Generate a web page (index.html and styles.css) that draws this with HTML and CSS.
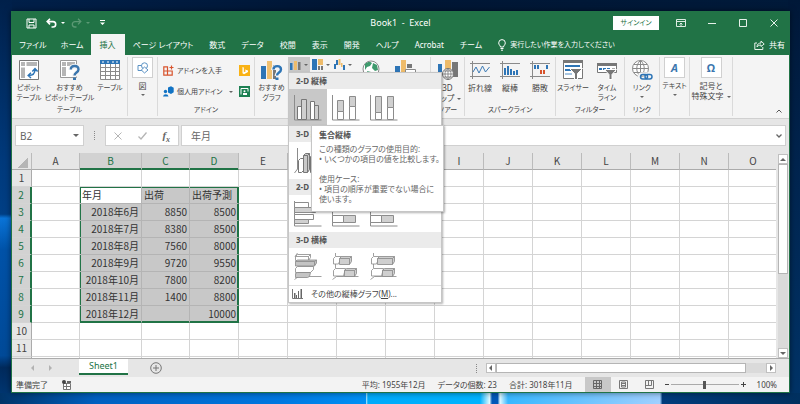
FILE: index.html
```html
<!DOCTYPE html>
<html lang="ja">
<head>
  <meta charset="UTF-8" />
  <meta name="viewport" content="width=device-width, initial-scale=1.0" />
  <title>Book1 - Excel</title>
  <link rel="stylesheet" href="styles.css">
</head>
<body>
  <div class="window">

    <!-- Title bar -->
    <header class="titlebar">
      <div class="quick">
        <button class="save" aria-label="上書き保存"><svg width="11" height="11" viewBox="0 0 11 11" fill="none" stroke="#fff"><path d="M1 1h9v9H1zM3 1v3.500h5V1M3 10V7h5v3"/></svg></button>
        <button aria-label="元に戻す"><svg width="11" height="10" viewBox="0 0 11 10" fill="none" stroke="#fff" stroke-width="1.600"><path d="M4 .8L1.200 3.600 4 6.400M1.500 3.600H7a2.700 2.700 0 0 1 0 5.400H5.500"/></svg></button>
        <i class="caret light"></i>
        <button class="off" aria-label="やり直し"><svg width="11" height="10" viewBox="0 0 11 10" fill="none" stroke="#5b9974" stroke-width="1.300"><path d="M7 .8l2.800 2.800L7 6.400M9.500 3.600H4a2.700 2.700 0 0 0 0 5.400h1.500"/></svg></button>
        <i class="caret dim"></i>
        <button class="custom" aria-label="クイック アクセス ツール バーのユーザー設定"><svg width="5" height="6" viewBox="0 0 5 6" fill="#fff"><path d="M0 0h5v1H0zM0 2.500h5L2.500 5z"/></svg></button>
      </div>
      <div class="title">Book1&nbsp; -&nbsp; Excel</div>
      <div class="winbtns">
        <button class="signin">サインイン</button>
        <button aria-label="リボンの表示オプション"><svg width="10" height="8" viewBox="0 0 10 8" fill="none" stroke="#dcebe2"><path d="M.5.5h9v7h-9zM.5 2.500h9M5 8V4M3.500 5.500L5 4l1.500 1.500"/></svg></button>
        <button aria-label="最小化"><svg width="8" height="8" viewBox="0 0 8 8" stroke="#e6f1ea"><path d="M0 4.500h8"/></svg></button>
        <button aria-label="最大化"><svg width="8" height="8" viewBox="0 0 8 8" fill="none" stroke="#e6f1ea"><path d="M.5.5h7v7h-7z"/></svg></button>
        <button aria-label="閉じる"><svg width="8" height="8" viewBox="0 0 8 8" stroke="#e6f1ea"><path d="M.5.5l7 7M7.500.5l-7 7"/></svg></button>
      </div>
    </header>

    <!-- Ribbon tabs -->
    <nav class="tabs">
      <button>ファイル</button>
      <button>ホーム</button>
      <button class="active">挿入</button>
      <button>ページ レイアウト</button>
      <button>数式</button>
      <button>データ</button>
      <button>校閲</button>
      <button>表示</button>
      <button>開発</button>
      <button>ヘルプ</button>
      <button>Acrobat</button>
      <button>チーム</button>
      <button class="tell"><svg width="8" height="12" viewBox="0 0 8 12" fill="none" stroke="#fff"><path d="M2.500 8C2.500 6.500.7 6 .7 3.900a3.300 3.300 0 0 1 6.600 0C7.300 6 5.500 6.500 5.500 8zM2.500 9.500h3M3 11.200h2"/></svg>実行したい作業を入力してください</button>
      <button class="share"><svg width="11" height="10" viewBox="0 0 11 10" fill="none" stroke="#e6f1ea"><path d="M3 3H.8v6.500h8V7M3 7c0-3 2-4 4-4V1l3.200 3L7 6.500V5C5.500 5 4 5.500 3 7z"/></svg>共有</button>
    </nav>

    <!-- Ribbon -->
    <section class="ribbon">
      <div class="group g-table small">
        <div class="tools">
          <button class="tool pivot"><svg width="20" height="20" viewBox="0 0 20 20"><path fill="#fff" stroke="#777" d="M.5.5h19v19H.5z"/><path fill="#b5b5b5" d="M2 2h4v4H2zM7.500 2H18v4H7.500zM2 7.500h4V18H2z"/><path fill="none" stroke="#2e75b6" stroke-width="1.500" d="M9.500 15.500c4.500 0 6.500-2 6.500-6M12 12.800l-2.800 2.700L12 18M13.300 11.500L16 8.700l2.600 2.800"/></svg><span>ピボット<br>テーブル</span></button>
          <button class="tool recpivot"><svg width="20" height="20" viewBox="0 0 20 20"><path fill="#fff" stroke="#999" d="M.5.5h16v17H.5z"/><path fill="#b5b5b5" d="M2 2h4v4H2zM7 2h8v4H7zM2 7h4v9H2z"/><path fill="none" stroke="#f4f4f4" stroke-width="5" d="M10.500 10c0-5 8-5 8 0 0 3-4 3-4 6.500"/><path fill="none" stroke="#3b76ae" stroke-width="2.400" d="M10.800 9.500c0-4.700 7.700-4.700 7.700 0 0 3-4 3-4 6"/><path fill="#3b76ae" d="M13 17.500h3V20h-3z"/></svg><span>おすすめ<br>ピボットテーブル</span></button>
          <button class="tool tbl"><svg width="20" height="20" viewBox="0 0 20 20"><path fill="#fff" d="M0 0h20v20H0z"/><path fill="#2e75b6" d="M0 0h20v4H0z"/><path fill="none" stroke="#8a8a8a" d="M.5 4v15.500h19V4M5.500 4v15M10.500 4v15M15.500 4v15M0 7.500h20M0 11.500h20M0 15.500h20"/><path fill="#fff" d="M2 1.500h2v1H2zM7 1.500h2v1H7zM12 1.500h2v1h-2zM16 1.500h2v1h-2z"/></svg><span>テーブル</span></button>
        </div>
        <div class="glabel">テーブル</div>
      </div>

      <div class="group g-shape">
        <button class="tool boxed"><b><svg width="12" height="12" viewBox="0 0 12 12" fill="#fff" stroke="#5b92c4"><path d="M1 3.500h6v5H1z"/><circle cx="7.500" cy="3.800" r="3"/><path d="M7.500 5L11 8 7.500 11 4.300 8z"/></svg></b><span>図</span><i class="caret"></i></button>
      </div>

      <div class="group g-addin small">
        <div class="addins">
          <div class="addcol">
            <button class="row"><svg width="11" height="11" viewBox="0 0 11 11" fill="none" stroke="#d8532c" stroke-width="1.200"><path d="M.8 1.800h3.700v8.400H.8zM.8 6h8.400v4.200H.8M6.500 2.500h4M8.500.5v4"/></svg>アドインを入手</button>
            <button class="row"><svg width="11" height="11" viewBox="0 0 11 11" fill="#1273c4"><path d="M5 1.500L8 .3l2.700 1.500v4.500L8 8 5 6.500z"/><circle cx="2.500" cy="5.500" r="1.700"/><path d="M0 10.500a2.800 2.800 0 0 1 5.500 0z"/></svg>個人用アドイン<i class="caret"></i></button>
          </div>
          <div class="addcol side">
            <button aria-label="Bing マップ"><svg width="11" height="11" viewBox="0 0 11 11"><path fill="#f9b215" d="M0 0h11v11H0z"/><path fill="#fff" d="M3.500 2l1.300.6v4.600l2-1-1-1.700L9 5.500v1.400L5 9.300l-1.500-1z"/></svg></button>
            <button aria-label="People Graph"><svg width="11" height="11" viewBox="0 0 11 11"><path fill="#1d8053" d="M0 0h11v11H0z"/><path fill="none" stroke="#fff" d="M2 8.500v-6h7v3"/><circle cx="5.500" cy="5.200" r="1" fill="#fff"/><path fill="#fff" d="M4 9V7h4v2z"/></svg></button>
          </div>
        </div>
        <div class="glabel">アドイン</div>
      </div>

      <div class="group g-chart">
        <div class="tools">
          <button class="tool recchart small"><svg width="22" height="20" viewBox="0 0 22 20"><path fill="#2e75b6" d="M0 6h5v13H0z"/><path fill="#f0c070" d="M6 1h5v18H6z"/><path fill="#777" d="M12 5h3v14h-3z"/><path fill="none" stroke="#f4f4f4" stroke-width="5" d="M12.500 10c0-4 7-4 7 0 0 2.500-3.500 3-3.500 6"/><path fill="none" stroke="#2e75b6" stroke-width="2.400" d="M12.500 9.500c0-4.500 7.500-4.500 7.500 0 0 3-4 3-4 6"/><path fill="#2e75b6" d="M14.500 17.500h3V20h-3z"/></svg><span>おすすめ<br>グラフ</span></button>
          <div class="drops">
            <div class="dropwrap">
              <button class="drop pressed" aria-label="縦棒グラフの挿入"><svg width="11" height="10" viewBox="0 0 11 10"><path fill="#2e75b6" d="M0 3h2.500v7H0z"/><path fill="#eebb6a" d="M4 1h3v9H4z"/><path fill="#777" d="M8 2h2.500v8H8z"/></svg><i class="caret"></i></button>

              <!-- Column chart gallery -->
              <div class="menu">
                <h3>2-D 縦棒</h3>
                <div class="gallery">
                  <button class="chosen" aria-label="集合縦棒"><svg width="28" height="27" viewBox="0 0 28 27"><path fill="none" stroke="#8c8c8c" d="M.5 1v25h27"/><path fill="#fff" stroke="#777" d="M3.500 12.500h4V25.500h-4zM16.500 7.500h4v18h-4z"/><path fill="#d0d0d0" stroke="#777" d="M7.500 5.500h5v20h-5zM20.500 11.500h4v14h-4z"/></svg></button>
                  <button aria-label="積み上げ縦棒"><svg width="28" height="27" viewBox="0 0 28 27"><path fill="none" stroke="#8c8c8c" d="M.5 1v25h27"/><path fill="#fff" stroke="#8c8c8c" d="M5.500 17.500h6v8h-6zM17.500 12.500h6v13h-6z"/><path fill="#d0d0d0" stroke="#8c8c8c" d="M5.500 6.500h6v11h-6zM17.500 2.500h6v10h-6z"/></svg></button>
                  <button aria-label="100% 積み上げ縦棒"><svg width="28" height="27" viewBox="0 0 28 27"><path fill="none" stroke="#8c8c8c" d="M.5 1v25h27"/><path fill="#fff" stroke="#8c8c8c" d="M5.500 18.500h6v7h-6zM17.500 13.500h6v12h-6z"/><path fill="#d0d0d0" stroke="#8c8c8c" d="M5.500 2.500h6v16h-6zM17.500 2.500h6v11h-6z"/></svg></button>
                </div>
                <h3>3-D 縦棒</h3>
                <div class="gallery">
                  <button aria-label="3-D 集合縦棒"><svg width="28" height="27" viewBox="0 0 28 27"><path fill="none" stroke="#8c8c8c" d="M3.500 1v21L.5 26M3.500 22h24"/><path fill="#fff" stroke="#777" d="M4.500 13.500l2-2h3v12l-2 2h-3zM16.500 9.500l2-2h3v16l-2 2h-3z"/><path fill="#c9c9c9" stroke="#777" d="M9.500 8.500l2-2h4v16l-2 3h-4zM9.500 8.500h4v17M13.500 8.500l2-2"/></svg></button>
                </div>
                <h3>2-D 横棒</h3>
                <div class="gallery">
                  <button aria-label="集合横棒"><svg width="28" height="27" viewBox="0 0 28 27"><path fill="none" stroke="#8c8c8c" d="M.5 1v25h27"/><path fill="#fff" stroke="#8c8c8c" d="M.5 2.500h14v5H.5zM.5 14.500h19v5H.5z"/><path fill="#d0d0d0" stroke="#8c8c8c" d="M.5 7.500h21v5H.5zM.5 19.500h14v4H.5z"/></svg></button>
                  <button aria-label="積み上げ横棒"><svg width="28" height="27" viewBox="0 0 28 27"><path fill="none" stroke="#8c8c8c" d="M.5 1v25h27"/><path fill="#fff" stroke="#8c8c8c" d="M.5 4.500h6v6h-6zM.5 15.500h11v7H.5z"/><path fill="#d0d0d0" stroke="#8c8c8c" d="M6.500 4.500h12v6h-12zM11.500 15.500h12v7h-12z"/></svg></button>
                  <button aria-label="100% 積み上げ横棒"><svg width="28" height="27" viewBox="0 0 28 27"><path fill="none" stroke="#8c8c8c" d="M.5 1v25h27"/><path fill="#fff" stroke="#8c8c8c" d="M.5 4.500h6v6h-6zM.5 15.500h11v7H.5z"/><path fill="#d0d0d0" stroke="#8c8c8c" d="M6.500 4.500h17v6h-17zM11.500 15.500h12v7h-12z"/></svg></button>
                </div>
                <h3>3-D 横棒</h3>
                <div class="gallery">
                  <button aria-label="3-D 集合横棒"><svg width="28" height="27" viewBox="0 0 28 27"><g stroke="#888" stroke-width=".8"><path fill="none" d="M3.500 0L1 3.500M.5 26.500l4-3h23"/><path fill="#fff" d="M1.500 3.500l2-2h13v3l-2 3h-13zM1.500 15.500l2-2h16v3l-3 3h-15zM1.500 3.500h13v4M14.500 3.500l2-2"/><path fill="#c4c4c4" d="M1.500 8.500l2-1.500h19v3l-2 3h-19zM1.500 20.500l2-1h13l-1 4-2 1h-12zM1.500 8.500h19v4M20.500 8.500l2-1.500"/></g></svg></button>
                  <button aria-label="3-D 積み上げ横棒"><svg width="28" height="27" viewBox="0 0 28 27"><g stroke="#888" stroke-width=".8"><path fill="none" d="M3.500 0v3M.5 26.500l4-3h22M3.500 11v4"/><path fill="#fff" d="M1.500 5.500l2-2h6l-3 7.500h-5zM1.500 17.500l2-2h10l-2 7.500h-10z"/><path fill="#cfcfcf" d="M7.500 5.500l2-2h10v5l-2 3h-10zM7.500 5.500h10v6M17.500 5.500l2-2M12.500 17.500l2-2h10v5l-2 3h-10zM12.500 17.500h10v6M22.500 17.500l2-2"/></g></svg></button>
                  <button aria-label="3-D 100% 積み上げ横棒"><svg width="28" height="27" viewBox="0 0 28 27"><g stroke="#888" stroke-width=".8"><path fill="none" d="M3.500 0v3M.5 26.500l4-3h22M3.500 11v4"/><path fill="#fff" d="M1.500 5.500l2-2h6l-3 7.500h-5zM1.500 17.500l2-2h10l-2 7.500h-10z"/><path fill="#cfcfcf" d="M7.500 5.500l2-2h15v5l-2 3h-15zM7.500 5.500h15v6M22.500 5.500l2-2M12.500 17.500l2-2h10v5l-2 3h-10zM12.500 17.500h10v6M22.500 17.500l2-2"/></g></svg></button>
                </div>
                <button class="more"><svg width="11" height="10" viewBox="0 0 11 10"><path fill="none" stroke="#777" d="M.5 0v9.500H11"/><path fill="#666" d="M2 4h1.500v5H2zM4 6h1v3H4zM6 2h1v7H6zM8.500 0H10v9H8.500z"/></svg><span>その他の縦棒グラフ(<u>M</u>)...</span></button>

                <div class="tip" role="tooltip">
                  <strong>集合縦棒</strong>
                  <p>この種類のグラフの使用目的:<br>• いくつかの項目の値を比較します。</p>
                  <p>使用ケース:<br>• 項目の順序が重要でない場合に<br>使います。</p>
                </div>
              </div>
            </div>
            <button class="drop" aria-label="階層構造グラフの挿入"><svg width="11" height="11" viewBox="0 0 11 11"><path fill="#2e75b6" d="M0 0h5v11H0z"/><path fill="#eebb6a" d="M6 0h5v6H6z"/><path fill="#777" d="M6 7h2v4H6zM9 7h2v4H9z"/></svg><i class="caret"></i></button>
            <button class="drop" aria-label="ウォーターフォール図の挿入"><svg width="11" height="11" viewBox="0 0 11 11"><path fill="#2e75b6" d="M0 5h2v5H0zM2 1h2v5H2z"/><path fill="#eebb6a" d="M4.500 0h2v6h-2zM7 4h1.500v4H7z"/><path fill="#2e75b6" d="M9 6h2v5H9z"/></svg><i class="caret"></i></button>
          </div>
          <button class="tool map" aria-label="マップ"><svg width="18" height="18" viewBox="0 0 18 18"><circle cx="9" cy="9" r="8" fill="#fff" stroke="#8a8a8a"/><path fill="#3f9a6d" d="M3 4c3-3 6-2 7-1l-2 3-3 1-2 3zM11 3l4 2 1 5-3 1-3-3zM5 11l4 1-2 5z"/></svg></button>
          <button class="tool pchart" aria-label="ピボットグラフ"><svg width="21" height="18" viewBox="0 0 21 18"><path fill="#2e75b6" d="M0 6h5v12H0z"/><path fill="#eebb6a" d="M6 0h5v18H6z"/><path fill="#fff" stroke="#888" d="M10.500 9.500h10v8h-10zM10 12.500h10"/><path fill="#777" d="M12 4h5v4h-5z"/></svg></button>
        </div>
      </div>

      <div class="group g-tour">
        <div class="tools">
          <button class="tool"><svg width="20" height="20" viewBox="0 0 20 20"><path fill="#2e75b6" d="M0 4h4v9H0z"/><path fill="#eebb6a" d="M7 0h6v12H7z"/><path fill="#777" d="M14 2h6v15h-6z"/><circle cx="10" cy="14" r="5.500" fill="#fff" stroke="#777"/><path fill="none" stroke="#777" stroke-width=".8" d="M10 8.500v11M4.500 14h11M6 11h8M6 17h8M10 8.500c-4 3-4 8 0 11M10 8.500c4 3 4 8 0 11"/></svg><span>3D<br>マップ<i class="caret"></i></span></button>
        </div>
        <div class="glabel">ツアー</div>
      </div>

      <div class="group g-spark">
        <div class="tools">
          <button class="tool"><svg width="20" height="20" viewBox="0 0 20 20" fill="none"><path stroke="#8a8a8a" d="M2.500 1v18M0 3.500h20M0 16.500h20"/><path stroke="#3b7ab5" d="M3 12l3-5 3 6 3.500-7 3 6 4-5"/></svg><span>折れ線</span></button>
          <button class="tool"><svg width="20" height="20" viewBox="0 0 20 20"><path fill="none" stroke="#8a8a8a" d="M2.500 1v18M0 3.500h20M0 16.500h20"/><path fill="#2e75b6" d="M4 8h2v7H4zM7 6h2v9H7zM10 9h2v6h-2zM13 11h2v4h-2zM16 10h2v5h-2z"/></svg><span>縦棒</span></button>
          <button class="tool"><svg width="20" height="20" viewBox="0 0 20 20"><path fill="none" stroke="#8a8a8a" d="M2.500 1v18M0 3.500h20M0 16.500h20"/><path fill="#2e75b6" d="M4 5h2v4H4zM7 5h2v4H7zM16 5h2v4h-2z"/><path fill="#d8532c" d="M10 10h2v4h-2zM13 10h2v4h-2z"/></svg><span>勝敗</span></button>
        </div>
        <div class="glabel">スパークライン</div>
      </div>

      <div class="group g-filter small">
        <div class="tools">
          <button class="tool"><svg width="20" height="20" viewBox="0 0 20 20"><path fill="#fff" stroke="#777" d="M.5.5h19v18H.5z"/><path fill="#777" d="M0 0h20v3H0z"/><path fill="#2e75b6" d="M2 5h15v2H2zM2 9h10v2H2z"/><path fill="#a8c6e2" d="M2 13h7v2H2z"/><path fill="#777" stroke="#fff" d="M6.500 8.500h13l-5 5v6h-3v-6z"/></svg><span>スライサー</span></button>
          <button class="tool"><svg width="20" height="20" viewBox="0 0 20 20"><path fill="#fff" stroke="#777" d="M.5 3.500h19v9H.5z"/><path fill="#777" d="M0 3h20v3H0z"/><path fill="#2e75b6" d="M2 8h3v2H2zM6 8h3v2H6zM10 8h3v2h-3z"/><path fill="#aaa" d="M15 8h3v2h-3z"/><path fill="#777" stroke="#fff" d="M7.500 9.500h12l-4.500 5v5h-3v-5z"/></svg><span>タイム<br>ライン</span></button>
        </div>
        <div class="glabel">フィルター</div>
      </div>

      <div class="group g-link small">
        <div class="tools">
          <button class="tool"><svg width="21" height="20" viewBox="0 0 21 20" fill="none"><circle cx="8.500" cy="8.500" r="8" fill="#fff" stroke="#8a8a8a"/><path stroke="#8a8a8a" d="M8.500.5v16M.5 8.500h16M2 4.500h13M2 12.500h13M8.500.5c-5 4-5 12 0 16M8.500.5c5 4 5 12 0 16"/><rect x="7" y="13.500" width="13.500" height="6" rx="3" stroke="#f4f4f4" stroke-width="2.500"/><rect x="8.500" y="14.500" width="7" height="4.500" rx="2.200" stroke="#2e75b6" stroke-width="1.500"/><rect x="13" y="14.500" width="7" height="4.500" rx="2.200" stroke="#2e75b6" stroke-width="1.500"/></svg><span>リンク</span><i class="caret"></i></button>
        </div>
        <div class="glabel">リンク</div>
      </div>

      <div class="group g-text small">
        <button class="tool boxed"><b class="glyph slant">A</b><span>テキスト</span><i class="caret"></i></button>
      </div>

      <div class="group g-symbol">
        <button class="tool boxed"><b class="glyph">Ω</b><span>記号と<br>特殊文字<i class="caret"></i></span></button>
      </div>

      <button class="collapse" aria-label="リボンを折りたたむ"><svg width="6" height="4" viewBox="0 0 6 4" fill="none" stroke="#555"><path d="M.5 3.500L3 1l2.500 2.500"/></svg></button>
    </section>

    <!-- Formula bar -->
    <div class="formula">
      <div class="namebox"><input type="text" value="B2" aria-label="名前ボックス"><i class="caret big"></i></div>
      <i class="dots"></i>
      <div class="fxbox">
        <button aria-label="キャンセル"><svg width="8" height="8" viewBox="0 0 8 8" stroke="#b5b5b5"><path d="M.5.5l7 7M7.500.5l-7 7"/></svg></button>
        <button aria-label="入力"><svg width="9" height="8" viewBox="0 0 9 8" fill="none" stroke="#b5b5b5" stroke-width="1.300"><path d="M.5 4.500L3 7l5.500-6.500"/></svg></button>
        <button class="fx" aria-label="関数の挿入">f<sub>x</sub></button>
      </div>
      <div class="entry"><input type="text" value="年月" aria-label="数式バー"><svg width="6" height="4" viewBox="0 0 6 4" fill="none" stroke="#666" stroke-width="1.300"><path d="M.5.5L3 3 5.500.5"/></svg></div>
    </div>

    <!-- Sheet -->
    <main class="sheet">
      <div class="gridwrap"><table class="grid" id="grid"></table></div>
      <div class="vscroll">
        <button aria-label="上へ"><i class="arrow up"></i></button>
        <div class="track"><div class="thumb"></div></div>
        <button aria-label="下へ"><i class="arrow down"></i></button>
      </div>
    </main>

    <div class="sheetbar">
      <div class="navs"><i class="arrow left"></i><i class="arrow right"></i></div>
      <button class="sheettab">Sheet1</button>
      <button class="add" aria-label="新しいシート"><svg width="12" height="12" viewBox="0 0 12 12" fill="none" stroke="#777"><circle cx="6" cy="6" r="5.300"/><path d="M3 6h6M6 3v6"/></svg></button>
      <i class="dots"></i>
      <div class="hscroll">
        <button aria-label="左へ"><i class="arrow left"></i></button>
        <div class="thumb"></div>
        <div class="track"></div>
        <button aria-label="右へ"><i class="arrow right"></i></button>
      </div>
    </div>

    <footer class="status">
      <span>準備完了</span>
      <svg class="macro" width="9" height="10" viewBox="0 0 9 10"><path fill="#fff" stroke="#777" d="M1.500 3.500h7v6h-7z"/><path stroke="#777" d="M2 6.500h6M4.500 4v5"/><circle cx="2" cy="2" r="2" fill="#444"/><path fill="#666" d="M5 1h4v2H5z"/></svg>
      <span class="sum first">平均: 1955年12月</span>
      <span class="sum">データの個数: 23</span>
      <span class="sum">合計: 3018年11月</span>
      <button class="view on" aria-label="標準"><svg width="9" height="9" viewBox="0 0 9 9" fill="none" stroke="#666"><path d="M.5.5h8v8h-8zM3.500 0v9M6.500 0v9M0 3.500h9M0 6.500h9"/></svg></button>
      <button class="view" aria-label="ページ レイアウト"><svg width="9" height="9" viewBox="0 0 9 9" fill="none" stroke="#777"><path d="M.5.5h8v8h-8zM2.500 2v5h4V2zM3 3.500h3M3 5.500h3"/></svg></button>
      <button class="view" aria-label="改ページ プレビュー"><svg width="9" height="9" viewBox="0 0 9 9" fill="none" stroke="#777"><path d="M.5.5h8v8h-8zM3.500 0v5.500M6.500 0v5.500H0"/></svg></button>
      <button class="zoombtn" aria-label="縮小"><svg width="4" height="5" viewBox="0 0 4 5" fill="#444"><path d="M0 2h4v1H0z"/></svg></button>
      <input class="zoom" type="range" min="0" max="100" value="50" aria-label="ズーム">
      <button class="zoombtn" aria-label="拡大"><svg width="5" height="5" viewBox="0 0 5 5" fill="#444"><path d="M0 2h5v1H0zM2 0h1v5H2z"/></svg></button>
      <span class="percent">100%</span>
    </footer>
  </div>

  <script>
    // Sheet contents, keyed by row number (columns B, C, D)
    const data = {
      2: ["年月", "出荷", "出荷予測"],
      3: ["2018年6月", "8850", "8500"],
      4: ["2018年7月", "8380", "8500"],
      5: ["2018年8月", "7560", "8000"],
      6: ["2018年9月", "9720", "9550"],
      7: ["2018年10月", "7800", "8200"],
      8: ["2018年11月", "1400", "8800"],
      9: ["2018年12月", "", "10000"]
    };
    const cols = "ABCDEFGHIJKLMNO".split("");

    let html = "<thead><tr><th class='corner'></th>";
    cols.forEach((c) => {
      html += `<th class="col-${c} ${"BCD".includes(c) ? "hot" : ""}">${c}</th>`;
    });
    html += "</tr></thead><tbody>";

    for (let r = 1; r <= 12; r++) {
      const inRange = r in data;
      html += `<tr><th class="${inRange ? "hot" : ""}">${r < 12 ? r : ""}</th>`;
      cols.forEach((c, i) => {
        let cls = "";
        let text = "";
        if (inRange && i >= 1 && i <= 3) {
          cls = "sel";
          text = data[r][i - 1];
          if (r === 2) cls += " top";
          else cls += " num";
          if (r === 9) cls += " bottom";
          if (i === 1) cls += " left";
          if (i === 3) cls += " right";
          if (r === 2 && i === 1) cls += " cursor";
        }
        html += `<td class="${cls}">${text}</td>`;
      });
      html += "</tr>";
    }
    document.getElementById("grid").innerHTML = html + "</tbody>";
  </script>
</body>
</html>
```
FILE: styles.css
```css
* {
  box-sizing: border-box;
}
body {
  margin: 0;
  padding: 11px 10px 11px 11px;
  height: 100vh;
  display: flex;
  overflow: hidden;
  font-family: "Noto Sans", "Noto Sans CJK JP", sans-serif;
  font-feature-settings: "palt";
  font-size: 8px;
  line-height: 10px;
  color: #444;
  white-space: nowrap;
  background:
    linear-gradient(90deg, #003468 0, #0060c0 12%, #0078e0 35%, #0091f5 45.7%, #9ae0ff 45.8%, #00aafa 46%, #00b4ff 60%, #e0faff 61.2%, #0058b8 61.5%, #0058b8 62.2%, #e0faff 62.5%, #38b8ff 63.5%, #a0d0ff 82.5%, #003c7c 82.8%, #00305f 100%) bottom / 100% 11px no-repeat,
    linear-gradient(180deg, #00204a 0, #003a7c 40%, #003f85 53%, #0a74d8 54%, #0052a8 62%, #004a98 88%, #002a5c 91%, #003a78 100%) left / 12px 100% no-repeat,
    linear-gradient(180deg, #001838 0, #00244e 40%, #003468 100%) right / 12px 100% no-repeat,
    linear-gradient(90deg, #00204a, #001634 45%, #001a3a);
}
button,
input {
  font: inherit;
  font-feature-settings: inherit;
  color: inherit;
  background: none;
  border: 0;
  padding: 0;
  margin: 0;
  white-space: nowrap;
}
svg {
  display: block;
  flex: none;
}
.window {
  flex: 1;
  min-width: 0;
  display: flex;
  flex-direction: column;
  background: #e6e6e6;
  border: 1px solid #217346;
  box-shadow: 0 0 6px rgba(0, 0, 0, 0.5);
}
.caret {
  display: inline-block;
  border: 2px solid transparent;
  border-top-color: #666;
  border-bottom: 0;
}
.caret.light {
  border-top-color: #fff;
}
.caret.dim {
  border-top-color: #5b9974;
}
.caret.big {
  border-width: 3px 3px 0;
}
.arrow {
  border: 3px solid transparent;
}
.arrow.up {
  border-bottom-color: #666;
  border-top: 0;
}
.arrow.down {
  border-top-color: #666;
  border-bottom: 0;
}
.arrow.left {
  border-right-color: #666;
  border-left: 0;
}
.arrow.right {
  border-left-color: #666;
  border-right: 0;
}
.dots {
  width: 1px;
  height: 9px;
  border-left: 1px dotted #888;
}

/* title bar */
.titlebar {
  height: 22px;
  display: grid;
  grid-template-columns: 1fr auto 1fr;
  align-items: center;
  background: #217346;
  color: #fff;
}
.quick {
  display: flex;
  align-items: center;
  gap: 4px;
  padding-left: 14px;
}
.quick .save {
  margin-right: 5px;
}
.quick .off {
  margin-left: 2px;
}
.quick .custom {
  margin-left: 6px;
}
.title {
  font-size: 9px;
}
.winbtns {
  display: flex;
  justify-content: flex-end;
  align-items: center;
}
.winbtns button {
  width: 31px;
  height: 14px;
  display: flex;
  align-items: center;
  justify-content: center;
}
.winbtns .signin {
  width: 46px;
  margin-right: 6px;
  background: #fff;
  color: #217346;
  font-size: 7px;
}

/* tabs */
.tabs {
  height: 21px;
  display: flex;
  background: #217346;
  color: #fff;
}
.tabs button {
  padding: 0 7px;
}
.tabs .active {
  padding: 0 9px;
  background: #f4f4f4;
  color: #217346;
}
.tabs .active ~ button {
  padding: 0 8px;
}
.tabs .tell,
.tabs .share {
  display: flex;
  align-items: center;
  gap: 4px;
}
.tabs .tell {
  font-size: 7px;
}
.tabs .share {
  margin-left: auto;
  margin-right: -4px;
}

/* ribbon */
.ribbon {
  height: 64px;
  display: flex;
  padding: 2px 0;
  background: #f4f4f4;
  border-bottom: 1px solid #d0d0d0;
}
.group {
  flex: none;
  display: flex;
  flex-direction: column;
  align-items: stretch;
  border-right: 1px solid #dadada;
}
.g-table { width: 116px; }
.g-shape { width: 30px; }
.g-addin { width: 97px; }
.g-chart { width: 176px; }
.g-tour { width: 34px; }
.g-spark { width: 91px; }
.g-filter { width: 69px; }
.g-link { width: 35px; }
.g-text { width: 30px; }
.g-symbol { width: 43px; }
.tools {
  flex: 1;
  display: flex;
  justify-content: center;
}
.small,
.glabel {
  font-size: 7px;
}
.glabel {
  text-align: center;
  height: 11px;
}
.tool {
  flex: 1;
  min-width: 0;
  display: flex;
  flex-direction: column;
  align-items: center;
  gap: 3px;
  padding-top: 3px;
}
.tool span .caret {
  margin-left: 3px;
  vertical-align: middle;
}
.pivot,
.tbl {
  flex: none;
  width: 34px;
}
.boxed {
  padding-top: 0;
}
.boxed b {
  width: 21px;
  height: 21px;
  display: flex;
  align-items: center;
  justify-content: center;
  background: #fff;
  border: 1px solid #d0d0d0;
}
.glyph {
  font-size: 11px;
  color: #3b76ae;
}
.slant {
  font-style: italic;
}
.addins {
  flex: 1;
  display: flex;
  justify-content: space-between;
  padding: 8px 4px 0 5px;
}
.addcol {
  display: flex;
  flex-direction: column;
  gap: 10px;
}
.row {
  height: 11px;
  display: flex;
  align-items: center;
  gap: 3px;
}
.row .caret {
  margin-left: 4px;
}
.g-chart .tools {
  padding-right: 7px;
}
.recchart {
  flex: none;
  width: 33px;
}
.drops {
  display: flex;
  height: 15px;
}
.drop {
  width: 22px;
  height: 15px;
  display: flex;
  align-items: center;
  justify-content: center;
  gap: 3px;
}
.pressed {
  background: #c8c8c8;
}
.dropwrap {
  position: relative;
}

/* chart gallery */
.menu {
  position: absolute;
  z-index: 5;
  left: 0;
  top: 15px;
  width: 154px;
  background: #fff;
  border: 1px solid #c6c6c6;
  box-shadow: 1px 1px 2px rgba(0, 0, 0, 0.3);
}
.menu h3 {
  margin: 0;
  padding: 0 7px;
  height: 16px;
  line-height: 15px;
  font-size: 8px;
  color: #555;
  background: #ebebeb;
}
.gallery {
  display: flex;
  height: 37px;
}
.gallery button {
  width: 38px;
  display: flex;
  align-items: center;
  justify-content: center;
}
.gallery .chosen {
  background: #c8c8c8;
}
.more {
  width: 100%;
  height: 17px;
  display: flex;
  align-items: center;
  gap: 8px;
  padding-left: 3px;
  border-top: 1px solid #e0e0e0;
}
.tip {
  position: absolute;
  left: 22px;
  top: 52px;
  width: 133px;
  height: 87px;
  padding: 4px 7px;
  color: #555;
  background: #fff;
  border: 1px solid #c6c6c6;
  box-shadow: 1px 1px 2px rgba(0, 0, 0, 0.3);
}
.tip p {
  margin: 4px 0 10px;
  color: #666;
}
.collapse {
  margin: auto 7px 3px auto;
}

/* formula bar */
.formula {
  display: flex;
  align-items: center;
  padding: 6px 3px 7px;
  color: #666;
}
.namebox,
.fxbox,
.entry {
  height: 21px;
  display: flex;
  align-items: center;
  background: #fff;
  border: 1px solid #d0d0d0;
  font-size: 10px;
}
.namebox {
  width: 69px;
  padding: 0 4px;
}
.namebox input {
  flex: 1;
  min-width: 0;
}
.formula .dots {
  margin: 0 10px;
}
.fxbox {
  width: 74px;
  justify-content: space-around;
  margin-right: 2px;
}
.fx {
  font-family: "Liberation Serif", serif;
  font-style: italic;
  font-weight: bold;
  font-size: 11px;
}
.fx sub {
  font-size: 8px;
  line-height: 1px;
}
.entry {
  flex: 1;
  padding: 0 3px 0 9px;
}
.entry input {
  flex: 1;
}

/* sheet */
.sheet {
  flex: 1;
  min-height: 0;
  display: flex;
}
.gridwrap {
  flex: 1;
  overflow: hidden;
}
.grid {
  width: 100%;
  table-layout: fixed;
  border-spacing: 0;
  font-family: "Noto Sans CJK JP", sans-serif;
  font-size: 10px;
  line-height: 14px;
}
.grid th,
.grid td {
  height: 17px;
  padding: 0 2px;
  overflow: hidden;
  border-right: 1px solid #d4d4d4;
  border-bottom: 1px solid #d4d4d4;
}
.grid th {
  width: 49px;
  padding: 0;
  font-weight: normal;
  background: #e6e6e6;
}
.grid thead th {
  border-right-color: #bbb;
  border-bottom-color: #ababab;
}
.grid tbody th {
  border-right-color: #ababab;
}
.grid .corner {
  width: 20px;
  background: linear-gradient(135deg, transparent 50%, #b5b5b5 50%) 5px 4px / 11px 11px no-repeat #e6e6e6;
}
.grid .col-A,
.grid .col-C {
  width: 48px;
}
.grid .col-B {
  width: 62px;
}
.grid .hot {
  background: #d2d2d2;
  color: #217346;
}
.grid thead .hot {
  box-shadow: inset 0 -1px #217346;
  border-bottom-color: #217346;
}
.grid tbody .hot {
  border-right: 2px solid #217346;
}
.grid td {
  background: #fff;
  color: #333;
}
.grid .num {
  text-align: right;
}
.grid .sel {
  background: #c8c8c8;
  border-color: #b4b4b4;
  box-shadow: inset 0 var(--t, 0px) #217346, inset 0 var(--b, 0px) #217346,
    inset var(--l, 0px) 0 #217346, inset var(--r, 0px) 0 #217346;
}
.grid .top {
  --t: 1px;
}
.grid .left {
  --l: 1px;
}
.grid .bottom {
  --b: -1px;
  border-bottom-color: #217346;
}
.grid .right {
  --r: -1px;
  border-right-color: #217346;
}
.grid .cursor {
  background: #fff;
}
.vscroll {
  width: 13px;
  display: flex;
  flex-direction: column;
  padding: 1px 1px 0 2px;
}
.vscroll button,
.hscroll button {
  width: 10px;
  height: 10px;
  display: flex;
  align-items: center;
  justify-content: center;
  background: #fff;
  border: 1px solid #c0c0c0;
}
.vscroll .track {
  flex: 1;
  width: 10px;
  background: #dadada;
}
.vscroll .thumb {
  height: 60%;
  background: #fff;
  border: 1px solid #b5b5b5;
}

/* sheet tabs */
.sheetbar {
  height: 19px;
  display: flex;
  align-items: center;
  border-top: 1px solid #ababab;
}
.navs {
  width: 67px;
  display: flex;
  justify-content: center;
  gap: 15px;
  padding-right: 8px;
  opacity: 0.4;
}
.sheettab {
  align-self: flex-start;
  width: 49px;
  height: 16px;
  background: #fff;
  color: #217346;
  font-size: 9px;
  border-bottom: 2px solid #217346;
}
.add {
  margin-left: 22px;
}
.sheetbar .dots {
  margin: 0 9px 0 auto;
}
.hscroll {
  width: 39%;
  display: flex;
  padding-right: 13px;
}
.hscroll .thumb {
  flex: 1;
  background: #fff;
  border: 1px solid #b5b5b5;
}
.hscroll .track {
  width: 20px;
  background: #dadada;
}

/* status bar */
.status {
  height: 15px;
  display: flex;
  align-items: center;
  padding: 0 12px 0 4px;
  background: #f3f3f3;
}
.macro {
  margin-left: 14px;
}
.sum {
  margin-right: 12px;
}
.sum.first {
  margin-left: auto;
}
.view {
  width: 26px;
  height: 15px;
  display: flex;
  align-items: center;
  justify-content: center;
}
.view.on {
  background: #c8c8c8;
}
.zoombtn {
  margin: 0 2px;
}
.zoom {
  appearance: none;
  width: 68px;
  height: 8px;
  background: linear-gradient(#aaa, #aaa) center / 100% 1px no-repeat;
}
.zoom::-webkit-slider-thumb {
  appearance: none;
  width: 3px;
  height: 8px;
  background: #555;
}
.percent {
  margin-left: 9px;
}
```
